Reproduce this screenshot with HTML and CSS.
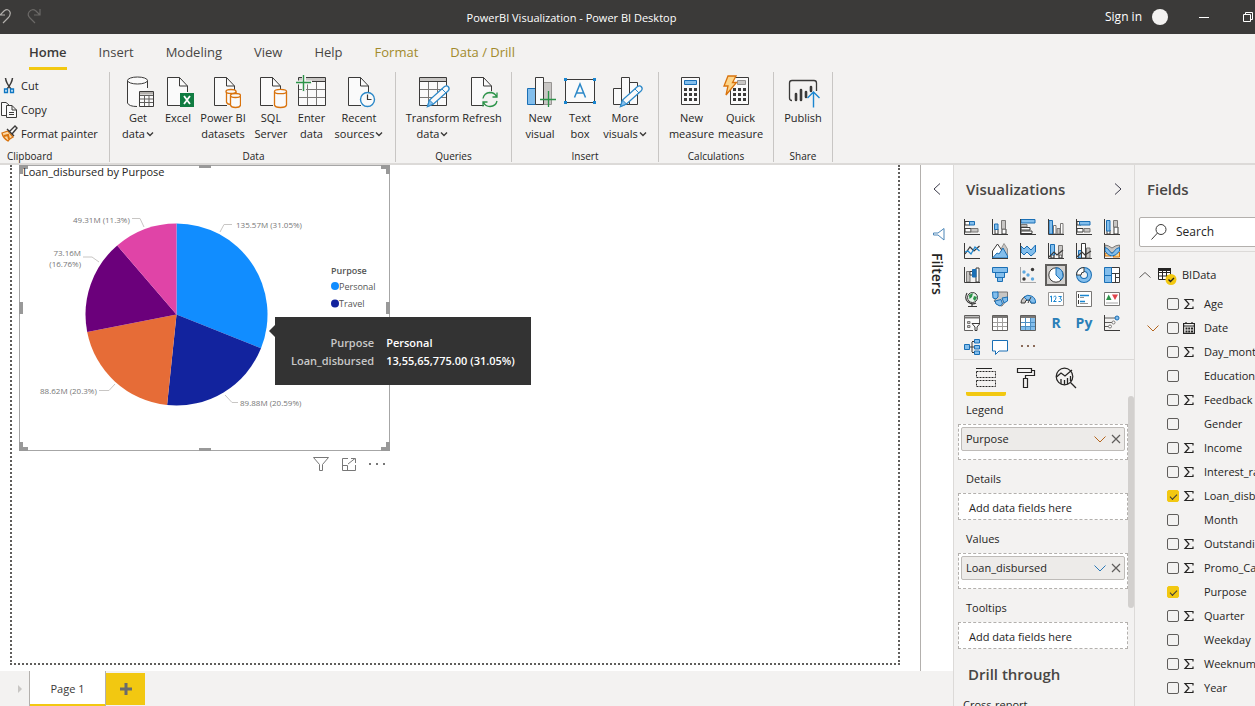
FILE: index.html
```html
<!DOCTYPE html>
<html lang="en">
<head>
<meta charset="utf-8">
<title>PowerBI Visualization - Power BI Desktop</title>
<link rel="stylesheet" href="styles.css">
</head>
<body>
<svg class="defs" aria-hidden="true">
  <symbol id="doc" viewBox="0 0 36 36"><path d="M7.500 3.500H19.500L28 12V31.500H7.500Z" fill="#fafafa"/><path d="M20 31.500H7.500V3.500H19.500L27.500 12V18M19.500 3.500V12H27.500" fill="none" stroke="#3b3a39"/></symbol>
  <symbol id="pencil" viewBox="0 0 36 36"><path d="M12.500 32.500L14.500 26L29.500 12.500Q32 11 33.500 13T33 17L18.500 30Z" fill="#fafafa" stroke="#2b88c8" stroke-width="1.300"/><path d="M12.500 32.500L14.500 26L18.500 30ZM27 15L31 19" fill="#83beec" stroke="#2b88c8"/></symbol>
  <symbol id="grid36" viewBox="0 0 36 36"><path d="M4.500 3.500H31.500V31.500H4.500Z" fill="#fafafa"/><path d="M4 4H32V7.500H4Z" fill="#c8c6c4"/><path d="M4 15.500H32M4 23.500H32M13.500 8V31M22.500 8V31" stroke="#797775"/><path d="M4.500 3.500H31.500V31.500H4.500ZM4 7.500H32" fill="none" stroke="#3b3a39"/></symbol>
  <symbol id="calc" viewBox="0 0 36 36"><path d="M7.500 3.500H25.500V30.500H7.500Z" fill="#fafafa" stroke="#3b3a39"/><path d="M10 14h3v3h-3zM15 14h3v3h-3zM20 14h3v3h-3zM10 19h3v3h-3zM15 19h3v3h-3zM20 19h3v3h-3zM10 24h3v3h-3zM15 24h3v3h-3zM20 24h3v3h-3z" fill="#3b3a39"/></symbol>
  <symbol id="sigma" viewBox="0 0 12 12"><path d="M10 3.500V1.500H2L6 6L2 10.500H10V8.500" fill="none" stroke="#252423" stroke-width="1.200"/></symbol>
  <symbol id="caret" viewBox="0 0 8 8"><path d="M1 2.500L4 5.500L7 2.500" fill="none" stroke="#3b3a39" stroke-width="1.400"/></symbol>
  <symbol id="down" viewBox="0 0 14 14"><path d="M1.500 4.500L7 10L12.500 4.500" fill="none" stroke="currentColor"/></symbol>
  <symbol id="close" viewBox="0 0 14 14"><path d="M3 3L11 11M11 3L3 11" stroke="#605e5c" stroke-width="1.200"/></symbol>
</svg>

<header class="titlebar">
  <div class="quick">
    <button aria-label="Undo"><svg width="12" height="18" viewBox="0 0 12 18"><path d="M0 7L4 3Q8 0 10 4Q11 7 8 10L3 15M0 7H5" fill="none" stroke="#b3b0ad" stroke-width="1.200"/></svg></button>
    <button aria-label="Redo"><svg width="16" height="18" viewBox="0 0 16 18"><path d="M14 7L10 3Q6 0 3 4Q1 7 4 10L9 15M14 1V7H8" fill="none" stroke="#6b6967" stroke-width="1.200"/></svg></button>
  </div>
  <h1 class="app-title">PowerBI Visualization - Power BI Desktop</h1>
  <div class="window-tools">
    <button class="signin">Sign in<span class="avatar"></span></button>
    <button aria-label="Minimize"><svg width="12" height="12" viewBox="0 0 12 12"><path d="M1 6.500H11" stroke="#fff"/></svg></button>
    <button aria-label="Restore"><svg width="12" height="12" viewBox="0 0 12 12"><path d="M1.500 3.500H8.500V10.500H1.500ZM3.500 3V1.500H10.500V8.500H9" fill="none" stroke="#fff"/></svg></button>
  </div>
</header>

<nav class="tabs">
  <button class="tab active">Home</button><button class="tab">Insert</button><button class="tab">Modeling</button><button class="tab">View</button><button class="tab">Help</button><button class="tab context">Format</button><button class="tab context">Data / Drill</button>
</nav>

<section class="ribbon">
  <div class="group clipboard">
    <div class="small-tools">
      <button><svg width="18" height="18" viewBox="0 0 18 18"><path d="M5.500 1Q6 6 11 12M12.500 1Q12 6 7 12" fill="none" stroke="#3b3a39" stroke-width="1.500"/><path d="M4.500 12h3v3.500h-3zM10.500 12h3v3.500h-3z" fill="#cfe6f8" stroke="#0f77c2" stroke-width="1.300"/></svg>Cut</button>
      <button><svg width="18" height="18" viewBox="0 0 18 18"><path d="M6 14.500H1.500V1.500H6L9 4" fill="#fafafa" stroke="#3b3a39"/><path d="M6.500 4.500H12L16.500 9V16.500H6.500ZM12 4.500V9H16.500M9 11.500H14M9 13.500H14" fill="#fafafa" stroke="#3b3a39"/></svg>Copy</button>
      <button><svg width="18" height="18" viewBox="0 0 18 18"><path d="M2 8L8 6L13 12Q9 14 8 16Q3 13 2 8Z" fill="#fbd7a4" stroke="#d9730d" stroke-width="1.300"/><path d="M4 11L8 10L9 14" fill="none" stroke="#d9730d" stroke-width="2"/><path d="M7 4L14 11M9 7L15 1L17 3L12 9" fill="#fafafa" stroke="#3b3a39" stroke-width="1.400"/></svg>Format painter</button>
    </div>
    <div class="group-name">Clipboard</div>
  </div>
  <div class="group data">
    <div class="tools">
      <button class="w40"><svg class="big" viewBox="0 0 36 36"><path d="M7.500 6.500V30Q9 33 18 33L19 18L27.500 16V6.500" fill="#fafafa"/><path d="M27.500 14V6.500M7.500 6.500V29Q9 32.500 17 32.500" fill="none" stroke="#3b3a39"/><ellipse cx="17.500" cy="6.500" rx="10" ry="3.500" fill="#fafafa" stroke="#3b3a39"/><path d="M19.500 17.500H33.500V32.500H19.500Z" fill="#fafafa" stroke="#3b3a39"/><path d="M20 18h13v2.500H20z" fill="#b3b0ad"/><path d="M20 21.500H33M20 25H33M20 28.500H33M24.500 21V32M29 21V32" stroke="#605e5c"/></svg>Get<br>data<svg class="caret"><use href="#caret"/></svg></button>
      <button class="w40"><svg class="big" viewBox="0 0 36 36"><use href="#doc"/><path d="M20 19H34V33H20Z" fill="#107c41"/><path d="M24 22L30 30M30 22L24 30" stroke="#fff" stroke-width="1.800"/></svg>Excel</button>
      <button class="w50"><svg class="big" viewBox="0 0 36 36"><g transform="translate(2)"><use href="#doc" width="36" height="36"/></g><g fill="#fafafa" stroke="#d9730d" stroke-width="1.300"><path d="M21.500 17.500V28Q22 30.500 26 30.500H31V17.500"/><ellipse cx="26" cy="17.500" rx="5" ry="2"/><path d="M25.500 21.500V31Q26 33.500 30.500 33.500T35.500 31V21.500"/><ellipse cx="30.500" cy="21.500" rx="5" ry="2"/></g></svg>Power BI<br>datasets</button>
      <button class="w46"><svg class="big" viewBox="0 0 36 36"><use href="#doc"/><g fill="#fafafa" stroke="#d9730d" stroke-width="1.300"><path d="M21.500 17.500V31Q22 33.500 27.500 33.500T33.500 31V17.500"/><ellipse cx="27.500" cy="17.500" rx="6" ry="2.200"/></g></svg>SQL<br>Server</button>
      <button class="w36"><svg class="big" viewBox="0 0 36 36"><use href="#grid36"/><path d="M10 0V18M1 8.500H18" stroke="#f3f2f1" stroke-width="4"/><path d="M9.500 1V17M2 8.500H17" stroke="#2b9348" stroke-width="1.400"/></svg>Enter<br>data</button>
      <button class="w60"><svg class="big" viewBox="0 0 36 36"><use href="#doc"/><circle cx="26.500" cy="25.500" r="7" fill="#fafafa" stroke="#2b88c8" stroke-width="1.400"/><path d="M26.500 20.500V25.500H30.500" fill="none" stroke="#3b3a39" stroke-width="1.200"/></svg>Recent<br>sources<svg class="caret"><use href="#caret"/></svg></button>
    </div>
    <div class="group-name">Data</div>
  </div>
  <div class="group">
    <div class="tools">
      <button class="w56"><svg class="big" viewBox="0 0 36 36"><use href="#grid36"/><use href="#pencil"/></svg>Transform<br>data<svg class="caret"><use href="#caret"/></svg></button>
      <button class="w42"><svg class="big" viewBox="0 0 36 36"><use href="#doc"/><circle cx="26" cy="25.500" r="8.500" fill="#f3f2f1"/><path d="M19 24.500Q20 19 26 18.500Q30.500 18.500 32.500 22.500M33 18.500V23H28.500M33 27Q32 32 26 32.500Q21.500 32.500 19.500 28.500M19 32.500V28H23.500" fill="none" stroke="#2b9348" stroke-width="1.300"/></svg>Refresh</button>
    </div>
    <div class="group-name">Queries</div>
  </div>
  <div class="group">
    <div class="tools">
      <button class="w40"><svg class="big" viewBox="0 0 36 36"><path d="M5.500 14.500H13.500V30.500H5.500Z" fill="#83beec" stroke="#1a6fb5"/><path d="M21.500 8.500H29.500V30.500H21.500Z" fill="#c8c6c4" stroke="#979593"/><path d="M13.500 3.500H21.500V30.500H13.500Z" fill="#fafafa" stroke="#3b3a39"/><path d="M26.500 17V33M18 25.500H34" stroke="#2b9348" stroke-width="1.300"/></svg>New<br>visual</button>
      <button class="w40"><svg class="big" viewBox="0 0 36 36"><path d="M3.500 5.500H32.500V28.500H3.500Z" fill="#fafafa" stroke="#3b3a39"/><path d="M2 4h3v3H2zM31 4h3v3h-3zM2 27h3v3H2zM31 27h3v3h-3z" fill="#1a86d0"/><path d="M12.500 23.500L18 10L23.500 23.500M14.500 19H21.500" fill="none" stroke="#2b88c8" stroke-width="1.500"/></svg>Text<br>box</button>
      <button class="w50"><svg class="big" viewBox="0 0 36 36"><path d="M6.500 14.500H14.500V30.500H6.500ZM22.500 8.500H30.500V30.500H22.500ZM14.500 3.500H22.500V30.500H14.500Z" fill="#fafafa" stroke="#3b3a39"/><g transform="translate(1)"><use href="#pencil" width="36" height="36"/></g></svg>More<br>visuals<svg class="caret"><use href="#caret"/></svg></button>
    </div>
    <div class="group-name">Insert</div>
  </div>
  <div class="group">
    <div class="tools">
      <button class="w49"><svg class="big" viewBox="0 0 36 36"><use href="#calc"/><path d="M10.500 6.500H22.500V10.500H10.500Z" fill="#83beec" stroke="#1a6fb5"/></svg>New<br>measure</button>
      <button class="w49"><svg class="big" viewBox="0 0 36 36"><use href="#calc"/><path d="M14.500 6.500H22.500V10.500H14.500Z" fill="#c8c6c4" stroke="#979593"/><path d="M5 2H13L9.500 8.500H13.500L3 21L5 12H1Z" fill="#fcd58a" stroke="#d9730d" stroke-width="1.300"/></svg>Quick<br>measure</button>
    </div>
    <div class="group-name">Calculations</div>
  </div>
  <div class="group">
    <div class="tools">
      <button class="w42"><svg class="big" viewBox="0 0 36 36"><path d="M7 26.500Q4.500 26.500 4.500 24V9Q4.500 6.500 7 6.500H29Q31.500 6.500 31.500 9V17" fill="none" stroke="#3b3a39" stroke-width="1.300"/><path d="M11 26V20M16 26V16M21 23V18M26 17V13" stroke="#3b3a39" stroke-width="2.600" stroke-linecap="round"/><path d="M28.500 33.500V18M22.500 24L28.500 18L34.500 24" fill="none" stroke="#1a86d0" stroke-width="1.400"/></svg>Publish</button>
    </div>
    <div class="group-name">Share</div>
  </div>
</section>

<main class="work">
  <div class="left">
    <div class="upper">
      <div class="canvas">
        <div class="page"></div>
        <article class="visual">
          <svg class="pie" viewBox="0 0 371 286" role="img" aria-label="Loan_disbursed by Purpose">
            <g transform="translate(0 1)">
              <path d="M157.500 148.500V57.500A91 91 0 0 1 242 182.300Z" fill="#118dff"/>
              <path d="M157.500 148.500L242 182.300A91 91 0 0 1 148.100 239Z" fill="#12239e"/>
              <path d="M157.500 148.500L148.100 239A91 91 0 0 1 68.200 165.900Z" fill="#e66c37"/>
              <path d="M157.500 148.500L68.200 165.900A91 91 0 0 1 98.200 79.500Z" fill="#6b007b"/>
              <path d="M157.500 148.500L98.200 79.500A91 91 0 0 1 157.500 57.500Z" fill="#e044a7"/>
              <path d="M113 52.500H121L125 61M213 58.500H205L201 66M64 91L73 91L80 96M80 224.500H90L96 218M219 236.500H213L206 229" fill="none" stroke="#c8c6c4"/>
              <g class="callout">
                <text x="54" y="57">49.31M (11.3%)</text><text x="217" y="62">135.57M (31.05%)</text>
                <text x="62" y="90" text-anchor="end">73.16M</text><text x="62" y="101" text-anchor="end">(16.76%)</text>
                <text x="21" y="228">88.62M (20.3%)</text><text x="221" y="240">89.88M (20.59%)</text>
              </g>
              <g class="key"><text class="key-title" x="312" y="108">Purpose</text><circle cx="316" cy="120" r="4" fill="#118dff"/><text x="320" y="124">Personal</text><circle cx="316" cy="137.500" r="4" fill="#12239e"/><text x="320" y="141">Travel</text></g>
            </g>
            <path d="M.500 0V285.500H370.500V.500H0" fill="none" stroke="#a6a6a6"/>
            <path d="M0 0H9V4H4V9H0ZM371 0H362V4H367V9H371ZM0 286H9V282H4V277H0ZM371 286H362V282H367V277H371ZM180 0H192V3H180ZM180 283H192V286H180ZM0 137H4V149H0ZM367 137H371V149H367Z" fill="#999"/>
          </svg>
          <h2>Loan_disbursed by Purpose</h2>
        </article>
        <div class="visual-actions">
          <button aria-label="Filters"><svg width="18" height="18" viewBox="0 0 18 18"><path d="M1.500 2.500H16.500L10.500 9.500V15.500H7.500V9.500Z" fill="none" stroke="#777"/></svg></button>
          <button aria-label="Focus mode"><svg width="18" height="18" viewBox="0 0 18 18"><path d="M8 3.500H2.500V15.500H15.500V10M2.500 10.500H7.500V15M8 9L15 3.500M11 3.500H15.500V8" fill="none" stroke="#777"/></svg></button>
          <button aria-label="More options"><svg width="18" height="18" viewBox="0 0 18 18"><path d="M1 8h2v2H1zM8 8h2v2H8zM15 8h2v2h-2z" fill="#777"/></svg></button>
        </div>
        <dl class="tip"><dt>Purpose</dt><dd>Personal</dd><dt>Loan_disbursed</dt><dd>13,55,65,775.00 (31.05%)</dd></dl>
      </div>
      <aside class="filters">
        <button aria-label="Expand filters"><svg width="14" height="14" viewBox="0 0 14 14"><path d="M10 1.500L4 7L10 12.500" fill="none" stroke="#3b3a49"/></svg></button>
        <svg class="funnel" width="14" height="14" viewBox="0 0 14 14"><path d="M1.500 6V8H6L12 13V1.500L6 6Z" fill="none" stroke="#4c86b8"/></svg>
        <span>Filters</span>
      </aside>
    </div>
    <footer class="pages">
      <button class="nav" aria-label="Next page"><svg width="6" height="10" viewBox="0 0 6 10"><path d="M1 1L5 5L1 9Z" fill="#c8c6c4"/></svg></button>
      <button class="page-tab">Page 1</button>
      <button class="add" aria-label="New page"><svg width="12" height="12" viewBox="0 0 12 12"><path d="M6 0V12M0 6H12" stroke="#6b6b6b" stroke-width="3"/></svg></button>
    </footer>
  </div>

  <aside class="viz">
    <div class="pane-head"><h2>Visualizations</h2><button aria-label="Collapse"><svg width="14" height="14" viewBox="0 0 14 14"><path d="M4 1.500L10 7L4 12.500" fill="none" stroke="#3b3a49"/></svg></button></div>
    <div class="gallery">
      <button aria-label="Stacked bar"><svg viewBox="0 0 16 16"><path d="M1 2.500H6V6H1ZM1 9.500H7V13H1Z" fill="#fff" stroke="#3b3a39"/><path d="M5.500 2.500H10.500V6H5.500Z" fill="#83beec" stroke="#1a6fb5"/><path d="M7 9.500H14V13H7Z" fill="#c8c6c4" stroke="#797775"/><path d="M.500 0V15.500H16" fill="none" stroke="#3b3a39"/></svg></button>
      <button aria-label="Stacked column"><svg viewBox="0 0 16 16"><path d="M3 10H6V15H3ZM10 10H14V15H10Z" fill="#fff" stroke="#3b3a39"/><path d="M2.500 5H6V10.500H2.500Z" fill="#83beec" stroke="#1a6fb5"/><path d="M9.500 1.500H13.500V10H9.500Z" fill="#c8c6c4" stroke="#797775"/><path d="M.500 0V15.500H16" fill="none" stroke="#3b3a39"/></svg></button>
      <button aria-label="Clustered bar"><svg viewBox="0 0 16 16"><path d="M1 .500H15V4H1Z" fill="#83beec" stroke="#1a6fb5"/><path d="M1 5.500H7V8H1Z" fill="#c8c6c4" stroke="#797775"/><path d="M1 8.500H10V11H1ZM1 12H12V14.500H1Z" fill="#fff" stroke="#3b3a39"/><path d="M.500 0V15.500H16" fill="none" stroke="#3b3a39"/></svg></button>
      <button aria-label="Clustered column"><svg viewBox="0 0 16 16"><path d="M1 1.500H4.500V15H1Z" fill="#83beec" stroke="#1a6fb5"/><path d="M5.500 6.500H8V15H5.500ZM12.500 4.500H15V15H12.500Z" fill="#fff" stroke="#797775"/><path d="M9 9.500H12V15H9Z" fill="#c8c6c4" stroke="#797775"/><path d="M.500 0V15.500H16" fill="none" stroke="#3b3a39"/></svg></button>
      <button aria-label="100% stacked bar"><svg viewBox="0 0 16 16"><path d="M1 2.500H5V6H1ZM1 9.500H7V13H1Z" fill="#fff" stroke="#3b3a39"/><path d="M3.500 2.500H14V6H3.500Z" fill="#83beec" stroke="#1a6fb5"/><path d="M8 9.500H14V13H8Z" fill="#c8c6c4" stroke="#797775"/><path d="M.500 0V15.500H16" fill="none" stroke="#3b3a39"/></svg></button>
      <button aria-label="100% stacked column"><svg viewBox="0 0 16 16"><path d="M3 11H6V15H3ZM10 8H14V15H10Z" fill="#fff" stroke="#3b3a39"/><path d="M2.500 1.500H6V12H2.500Z" fill="#83beec" stroke="#1a6fb5"/><path d="M9.500 1.500H13.500V8H9.500Z" fill="#c8c6c4" stroke="#797775"/><path d="M.500 0V15.500H16" fill="none" stroke="#3b3a39"/></svg></button>

      <button aria-label="Line"><svg viewBox="0 0 16 16"><path d="M1 11L6 4L10 8L15.500 3" fill="none" stroke="#3b3a39" stroke-width="1.200"/><path d="M1 9L4 8L7 11L11 4L15.500 8" fill="none" stroke="#1a86d0" stroke-width="1.200"/><path d="M.500 0V15.500H16" fill="none" stroke="#3b3a39"/></svg></button>
      <button aria-label="Area"><svg viewBox="0 0 16 16"><path d="M9 6L12 .500L15.500 6V15H9Z" fill="#c8c6c4" stroke="#979593"/><path d="M.500 8L5.500 1L11 9V15H.500Z" fill="#fff" stroke="#3b3a39"/><path d="M.500 15L5 10L7 11L11 5L15.500 13V15Z" fill="#83beec" stroke="#1a6fb5"/><path d="M0 15.500H16" stroke="#3b3a39"/></svg></button>
      <button aria-label="Stacked area"><svg viewBox="0 0 16 16"><path d="M1 3L4 6L7 3L11 7L15.500 2V9L11 13L7 9L4 12L1 9Z" fill="#83beec" stroke="#1a6fb5"/><path d="M.500 0V15.500H16" fill="none" stroke="#3b3a39"/></svg></button>
      <button aria-label="Line and stacked column"><svg viewBox="0 0 16 16"><path d="M2.500 1.500H6.500V12H2.500Z" fill="#83beec" stroke="#1a6fb5"/><path d="M10.500 2.500H14.500V12H10.500Z" fill="#c8c6c4" stroke="#797775"/><path d="M3 12V15H6V12M11 12V15H14V12M1 14L6 9L9 12L15 7" fill="none" stroke="#3b3a39" stroke-width="1.200"/><path d="M.500 0V15.500H16" fill="none" stroke="#3b3a39"/></svg></button>
      <button aria-label="Line and clustered column"><svg viewBox="0 0 16 16"><path d="M2.500 7.500H5.500V15H2.500Z" fill="#83beec" stroke="#1a6fb5"/><path d="M5.500 .500H9.500V15H5.500Z" fill="#fff" stroke="#3b3a39"/><path d="M10.500 5H14V15H10.500Z" fill="#c8c6c4" stroke="#797775"/><path d="M1 14L6 9L9 12L15 8" fill="none" stroke="#3b3a39" stroke-width="1.200"/><path d="M.500 0V15.500H16" fill="none" stroke="#3b3a39"/></svg></button>
      <button aria-label="Ribbon"><svg viewBox="0 0 16 16"><path d="M1 10Q4 10 7 13H1ZM15.500 9Q11 10 9 14H15.500Z" fill="#fcd58a" stroke="#d9730d"/><path d="M1 2Q4 2 8 5Q12 2 15.500 2V6Q12 7 8 10Q4 7 1 6Z" fill="#c8c6c4" stroke="#797775"/><path d="M1 4.500Q4 5 6 8.500T10 8.500T15.500 4.500V8Q12 13 8 13T1 8Z" fill="#83beec" stroke="#1a6fb5"/><path d="M.500 0V15.500H16" fill="none" stroke="#3b3a39"/></svg></button>

      <button aria-label="Waterfall"><svg viewBox="0 0 16 16"><path d="M2.500 4.500H6V15H2.500Z" fill="#c8c6c4" stroke="#797775"/><path d="M6 4.500H9V8H6ZM12 1H15V15H12Z" fill="#fff" stroke="#3b3a39"/><path d="M8.500 2.500H12V10H8.500Z" fill="#1a6fb5" stroke="#1a6fb5"/><path d="M.500 0V15.500H16" fill="none" stroke="#3b3a39"/></svg></button>
      <button aria-label="Funnel"><svg viewBox="0 0 16 16"><path d="M.500 .500H15.500V5.500H.500ZM3.500 5.500H12.500V10.500H3.500ZM5.500 10.500H10.500V14.500H5.500Z" fill="#83beec" stroke="#1a6fb5"/></svg></button>
      <button aria-label="Scatter"><svg viewBox="0 0 16 16"><g fill="#3b3a39"><circle cx="12.500" cy="2.500" r="1.700"/><circle cx="4" cy="12" r="1.700"/></g><g fill="#5ea9e0"><circle cx="4" cy="5" r="1.700"/><circle cx="8" cy="8" r="1.700"/><circle cx="12.500" cy="12" r="1.700"/></g><path d="M.500 0V15.500H16" fill="none" stroke="#a6a6a6"/></svg></button>
      <button class="selected" aria-label="Pie"><svg viewBox="0 0 16 16"><circle cx="8" cy="8" r="7.200" fill="#fff" stroke="#3b3a39"/><path d="M8 8V.800A7.200 7.200 0 0 1 13 13Z" fill="#83beec" stroke="#1a6fb5"/></svg></button>
      <button aria-label="Donut"><svg viewBox="0 0 16 16"><circle cx="8" cy="8" r="5.500" fill="none" stroke="#1a6fb5" stroke-width="5"/><circle cx="8" cy="8" r="5.500" fill="none" stroke="#83beec" stroke-width="3"/><path d="M8 .500A7.500 7.500 0 0 0 .500 8H5A3 3 0 0 1 8 5Z" fill="#fff" stroke="#3b3a39"/></svg></button>
      <button aria-label="Treemap"><svg viewBox="0 0 16 16"><path d="M7 .500H15.500V15.500H7Z" fill="#fff" stroke="#3b3a39"/><path d="M7 6.500H15.500M11.500 6.500V15M11 10.500H15" fill="none" stroke="#3b3a39"/><path d="M.500 .500H7.500V15.500H.500ZM.500 8.500H7" fill="#83beec" stroke="#1a6fb5"/></svg></button>

      <button aria-label="Map"><svg viewBox="0 0 16 16"><circle cx="8.500" cy="6.500" r="5" fill="#e8f3ea" stroke="#3b3a39"/><path d="M5 4L9 2L8 6L5.500 8ZM10 5L13 6L11 10L9 8Z" fill="#2b9348"/><path d="M3 2Q0 8 4 11T12 12M8 13V15M4 15.500H13" fill="none" stroke="#3b3a39" stroke-width="1.200"/></svg></button>
      <button aria-label="Filled map"><svg viewBox="0 0 16 16"><path d="M5 1L15.500 1V8L10 15L6 14L2 10L5 6Z" fill="#c8c6c4" stroke="#797775"/><path d="M.500 1H6V6L4 8L1 7ZM3 10L9 8.500L10.500 13L8 15L4 13ZM10 7L15.500 6V10L12 12Z" fill="#83beec" stroke="#1a6fb5"/></svg></button>
      <button aria-label="Gauge"><svg viewBox="0 0 16 16"><path d="M1 12A7 7 0 0 1 15 12H11A3 3 0 0 0 5 12Z" fill="#c8c6c4" stroke="#3b3a39"/><path d="M4 6A7 7 0 0 1 15.500 12H11A3 3 0 0 0 7 9Z" fill="#83beec" stroke="#1a6fb5"/><path d="M8 12L11 6" stroke="#3b3a39"/></svg></button>
      <button aria-label="Card"><svg viewBox="0 0 16 16"><path d="M.500 1.500H15.500V14.500H.500Z" fill="#fff" stroke="#979593"/><path d="M2 6L3.500 5V11M5.500 6Q8 4 8 6.500T5.500 10.500H8.500M10.500 5.500H13.500L12 7.500Q14 8 13.500 9.500T10.500 10.500" fill="none" stroke="#1a86d0"/></svg></button>
      <button aria-label="Multi-row card"><svg viewBox="0 0 16 16"><path d="M.500 .500H15.500V15.500H.500Z" fill="#fff" stroke="#797775"/><path d="M2.500 3V7M2.500 9V13" stroke="#3b3a39"/><path d="M4 4.500H13M4 10.500H9" stroke="#1a86d0" stroke-width="1.500"/><path d="M4 6.500H8M4 12.500H12" stroke="#979593"/></svg></button>
      <button aria-label="KPI"><svg viewBox="0 0 16 16"><path d="M.500 1.500H15.500V14.500H.500Z" fill="#fff" stroke="#797775"/><path d="M2 9H7.500L4.700 3.500Z" fill="#2b9348"/><path d="M8 3.500H14L11 9Z" fill="#e0434a"/><path d="M2 12H14" stroke="#a6a6a6"/></svg></button>

      <button aria-label="Slicer"><svg viewBox="0 0 16 16"><path d="M9 15.500H.500V.500H15.500V8" fill="#fafafa" stroke="#605e5c"/><path d="M.500 2.500H15.500" stroke="#797775" stroke-width="2"/><path d="M3.500 6.500H6V8.500H3.500ZM3.500 10.500H6V12.500H3.500Z" fill="#c8c6c4" stroke="#797775"/><path d="M8 8.500H16L13 12V15.500H11V12Z" fill="#fff" stroke="#3b3a39"/></svg></button>
      <button aria-label="Table"><svg viewBox="0 0 16 16"><path d="M.500 .500H15.500V15.500H.500Z" fill="#fff" stroke="#605e5c"/><path d="M1 2H15" stroke="#797775" stroke-width="2"/><path d="M1 7.500H15M1 11.500H15M5.500 3V15M10.500 3V15" stroke="#a19f9d"/></svg></button>
      <button aria-label="Matrix"><svg viewBox="0 0 16 16"><path d="M.500 .500H15.500V15.500H.500Z" fill="#83beec" stroke="#605e5c"/><path d="M1 3H10V11H1Z" fill="#fff"/><path d="M1 2H15" stroke="#797775" stroke-width="2"/><path d="M1 7.500H15M1 11.500H15M5.500 3V15M10.500 3V15" stroke="#4c8fc4"/></svg></button>
      <button class="script-name">R</button>
      <button class="script-name">Py</button>
      <button aria-label="Key influencers"><svg viewBox="0 0 16 16"><path d="M1 3H12M1 7.500H8M1 11.500H5" stroke="#605e5c"/><circle cx="13" cy="3" r="2" fill="#83beec" stroke="#1a6fb5"/><circle cx="9.500" cy="7.500" r="1.500" fill="#fff" stroke="#797775"/><circle cx="6" cy="11.500" r="1.500" fill="#fff" stroke="#797775"/><path d="M.500 0V15.500H16" fill="none" stroke="#3b3a39"/></svg></button>

      <button aria-label="Decomposition tree"><svg viewBox="0 0 16 16"><path d="M5 8H11M8 3V13M8 2.500H11M8 13.500H11" fill="none" stroke="#3b3a39"/><path d="M.500 5.500H5.500V10.500H.500ZM10.500 .500H15.500V4H10.500ZM10.500 6.500H15.500V10H10.500ZM10.500 12H15.500V15.500H10.500Z" fill="#83beec" stroke="#1a6fb5"/></svg></button>
      <button aria-label="Q&amp;A"><svg viewBox="0 0 16 16"><path d="M.500 1.500H15.500V12H7L3.500 15.500V12H.500Z" fill="#fff" stroke="#1a6fb5"/></svg></button>
      <button aria-label="More visuals"><svg viewBox="0 0 16 16"><path d="M1 6h2v2H1zM7 6h2v2H7zM13 6h2v2h-2z" fill="#8a6a58"/></svg></button>
    </div>
    <div class="modes">
      <button class="on" aria-label="Fields"><svg width="24" height="24" viewBox="0 0 24 24"><path d="M2 2.500H18" stroke="#252423"/><path d="M2.500 5.500H21.500V11.500H2.500ZM2.500 14.500H21.500V20.500H2.500Z" fill="none" stroke="#252423" stroke-dasharray="2 1"/></svg></button>
      <button aria-label="Format"><svg width="24" height="24" viewBox="0 0 24 24"><path d="M3.500 2.500H17.500V6.500H3.500ZM17.500 4.500H20.500V9.500H11.500V12.500M9.500 12.500H13.500V21.500H9.500Z" fill="none" stroke="#252423" stroke-width="1.200"/></svg></button>
      <button aria-label="Analytics"><svg width="24" height="24" viewBox="0 0 24 24"><circle cx="10.500" cy="10.500" r="8.300" fill="none" stroke="#252423" stroke-width="1.200"/><path d="M2.500 11L7 7L11 10L18 4M16.500 16.500L22 22M7 18V13M10.500 18.500V14M13.500 18V12M16.500 15V10" fill="none" stroke="#252423" stroke-width="1.300"/></svg></button>
    </div>
    <div class="wells">
      <section><h3>Legend</h3><div class="well"><div class="pill"><span>Purpose</span><button class="warm" aria-label="Purpose options"><svg class="i14"><use href="#down"/></svg></button><button aria-label="Remove Purpose"><svg class="i14"><use href="#close"/></svg></button></div></div></section>
      <section><h3>Details</h3><div class="well empty">Add data fields here</div></section>
      <section><h3>Values</h3><div class="well"><div class="pill"><span>Loan_disbursed</span><button class="cool" aria-label="Loan_disbursed options"><svg class="i14"><use href="#down"/></svg></button><button aria-label="Remove Loan_disbursed"><svg class="i14"><use href="#close"/></svg></button></div></div></section>
      <section><h3>Tooltips</h3><div class="well empty">Add data fields here</div></section>
      <h2>Drill through</h2>
      <p>Cross-report</p>
      <div class="thumb"></div>
    </div>
  </aside>

  <aside class="fields">
    <div class="pane-head"><h2>Fields</h2></div>
    <label class="search"><svg width="18" height="18" viewBox="0 0 18 18"><circle cx="11" cy="6.500" r="5" fill="none" stroke="#3b3a39"/><path d="M7.500 10L1.500 16.500" stroke="#3b3a39"/></svg><input type="text" placeholder="Search" aria-label="Search"></label>
    <div class="list">
      <button class="table-row"><svg width="14" height="14" viewBox="0 0 14 14"><path d="M1.500 9.500L7 4.500L12.500 9.500" fill="none" stroke="#605e5c"/></svg><svg width="20" height="20" viewBox="0 0 20 20"><path d="M1.500 3.500H13.500V14.500H1.500ZM1.500 7.500H13.500M1.500 11H13.500M5.500 6V14M9.500 6V14" fill="#fff" stroke="#252423"/><path d="M1 3H14V6H1Z" fill="#252423"/><circle cx="14" cy="14.500" r="5.500" fill="#f2c811"/><path d="M11.500 14.500L13.500 16.500L17 13" fill="none" stroke="#252423" stroke-width="1.400"/></svg><b>BIData</b></button>
      <label class="field"><i></i><input type="checkbox"><svg class="i12"><use href="#sigma"/></svg><span>Age</span></label>
      <label class="field"><i class="warm"><svg class="i14"><use href="#down"/></svg></i><input type="checkbox"><svg class="i12" viewBox="0 0 12 12"><path d="M.600 1.500H11.400V11.400H.600ZM.600 4H11.400M3 0V2M9 0V2" fill="none" stroke="#252423" stroke-width="1.200"/><path d="M2.500 5.500h2v2h-2zM5.200 5.500h2v2h-2zM8 5.500h2v2H8zM2.500 8.500h2v2h-2zM5.200 8.500h2v2h-2zM8 8.500h2v2H8z" fill="#252423"/></svg><span>Date</span></label>
      <label class="field"><i></i><input type="checkbox"><svg class="i12"><use href="#sigma"/></svg><span>Day_month</span></label>
      <label class="field"><i></i><input type="checkbox"><svg class="i12"></svg><span>Education</span></label>
      <label class="field"><i></i><input type="checkbox"><svg class="i12"><use href="#sigma"/></svg><span>Feedback</span></label>
      <label class="field"><i></i><input type="checkbox"><svg class="i12"></svg><span>Gender</span></label>
      <label class="field"><i></i><input type="checkbox"><svg class="i12"><use href="#sigma"/></svg><span>Income</span></label>
      <label class="field"><i></i><input type="checkbox"><svg class="i12"><use href="#sigma"/></svg><span>Interest_rate</span></label>
      <label class="field"><i></i><input type="checkbox" checked><svg class="i12"><use href="#sigma"/></svg><span>Loan_disbursed</span></label>
      <label class="field"><i></i><input type="checkbox"><svg class="i12"></svg><span>Month</span></label>
      <label class="field"><i></i><input type="checkbox"><svg class="i12"><use href="#sigma"/></svg><span>Outstanding</span></label>
      <label class="field"><i></i><input type="checkbox"><svg class="i12"><use href="#sigma"/></svg><span>Promo_Calls</span></label>
      <label class="field"><i></i><input type="checkbox" checked><svg class="i12"></svg><span>Purpose</span></label>
      <label class="field"><i></i><input type="checkbox"><svg class="i12"><use href="#sigma"/></svg><span>Quarter</span></label>
      <label class="field"><i></i><input type="checkbox"><svg class="i12"></svg><span>Weekday</span></label>
      <label class="field"><i></i><input type="checkbox"><svg class="i12"><use href="#sigma"/></svg><span>Weeknum</span></label>
      <label class="field"><i></i><input type="checkbox"><svg class="i12"><use href="#sigma"/></svg><span>Year</span></label>
    </div>
  </aside>
</main>
</body>
</html>
```

FILE: styles.css
```css
* { box-sizing: border-box; }
body { margin: 0; height: 100vh; overflow: hidden; display: flex; flex-direction: column; background: #f3f2f1; color: #252423; font: 11px/16px "Open Sans", "Noto Sans", sans-serif; }
button { padding: 0; border: 0; background: none; font: inherit; color: inherit; }
h1, h2, h3, p, dl, dt, dd { margin: 0; font-weight: 400; }
svg { display: block; flex: none; }
.defs { position: absolute; width: 0; height: 0; }

.titlebar { flex: none; height: 34px; display: flex; align-items: center; background: #3b3a39; color: #fff; overflow: hidden; }
.quick { display: flex; width: 38px; gap: 14px; }
.app-title { margin: 0 auto; padding-top: 2px; font-size: 11px; white-space: nowrap; }
.window-tools { width: 150px; display: flex; align-items: center; flex: none; }
.window-tools button { flex: none; }
.window-tools .signin { display: flex; align-items: center; gap: 10px; margin-right: 30px; font-size: 12px; }
.window-tools button:last-child { margin-left: 32px; }
.avatar { width: 16px; height: 16px; border-radius: 50%; background: #f3f2f1; }

.tabs { flex: none; height: 36px; padding-left: 29px; display: flex; gap: 32px; font-size: 13px; }
.tab { height: 36px; padding-top: 2px; border-bottom: 3px solid transparent; color: #484644; white-space: nowrap; }
.tab.active { font-weight: 600; color: #3b3a39; border-color: #f2c811; }
.tab.context { color: #a28a2c; }

.ribbon { flex: none; height: 95px; display: flex; padding-top: 2px; border-bottom: 2px solid #dcdad8; }
.group { display: flex; flex-direction: column; justify-content: space-between; height: 90px; padding: 2px 8px 0; border-right: 1px solid #c8c6c4; }
.group.data { padding: 2px 6px 0 8px; }
.tools { display: flex; justify-content: center; white-space: nowrap; }
.tools button { display: block; align-self: flex-start; text-align: center; }
.big { width: 36px; height: 36px; margin: 0 auto; }
.caret { display: inline-block; width: 8px; height: 8px; margin-left: 1px; }
.group-name { font-size: 10px; line-height: 12px; text-align: center; }
.w36 { width: 35px; } .w40 { width: 40px; } .w42 { width: 42px; } .w46 { width: 46px; }
.w49 { width: 49px; } .w50 { width: 50px; } .w56 { width: 57px; } .w60 { width: 60px; }
.group.clipboard { width: 110px; padding: 2px 0 0; }
.clipboard .group-name { text-align: left; padding-left: 7px; }
.small-tools { display: grid; grid-auto-rows: 24px; }
.small-tools button { display: flex; align-items: center; gap: 3px; white-space: nowrap; }

.work { flex: 1; min-height: 0; display: flex; }
.left { flex: 1; min-width: 0; display: flex; flex-direction: column; }
.upper { flex: 1; min-height: 0; display: flex; background: #fff; }
.canvas { position: relative; flex: 1; overflow: hidden; padding: 0 20px 6px 10px; }
.page { height: 100%; border: 2px dotted #605e5c; border-top: 0; }
.visual { position: absolute; left: 19px; top: 0; }
.visual h2 { position: absolute; left: 4px; top: 0; font-size: 11px; line-height: 14px; white-space: nowrap; }
.pie { width: 371px; height: 286px; }
.callout { font-size: 8px; fill: #777; }
.key { font-size: 9px; fill: #555; }
.key-title { font-weight: 600; }
.visual-actions { position: absolute; left: 312px; top: 290px; display: flex; gap: 10px; }
.tip { position: absolute; left: 275px; top: 152px; padding: 17px 16px 15px; display: grid; grid-template-columns: auto auto; column-gap: 12px; line-height: 18px; background: #333; color: #fff; white-space: nowrap; font-size: 11px; }
.tip dt, .tip dd { font-weight: 600; }
.tip dt { text-align: right; color: #c8c8c8; }
.tip::before { content: ""; position: absolute; left: -6px; top: 8px; border: 6px solid transparent; border-right-color: #333; border-left: 0; }
.filters { width: 33px; flex: none; border-left: 1px solid #b3b0ad; display: flex; flex-direction: column; align-items: center; padding-top: 17px; }
.funnel { margin: 31px 0 12px 4px; }
.filters span { writing-mode: vertical-rl; font-size: 14px; font-weight: 600; }

.pages { height: 35px; flex: none; display: flex; }
.pages .nav { width: 29px; display: flex; align-items: center; justify-content: flex-end; padding-right: 6px; }
.page-tab { width: 77px; background: #fff; border: 1px solid #b3b0ad; border-width: 0 1px; box-shadow: inset 0 -2px #f2c811; color: #3b3a39; font-weight: 500; }
.add { width: 39px; height: 32px; margin-top: 2px; background: #f2c811; display: grid; place-items: center; }

.viz { flex: none; width: 182px; border: 1px solid #dcdad8; border-width: 0 1px; display: flex; flex-direction: column; overflow: hidden; }
.pane-head { flex: none; height: 48px; padding: 0 9px 0 12px; display: flex; align-items: center; justify-content: space-between; }
.pane-head h2, .wells h2 { font-size: 15px; line-height: 20px; font-weight: 600; color: #484644; }
.gallery { flex: none; display: grid; grid-template-columns: repeat(6, 28px); grid-auto-rows: 24px; padding: 2px 0 0 4px; height: 147px; border-bottom: 1px solid #dcdad8; }
.gallery button { display: grid; place-items: center; width: 22px; height: 22px; margin: 1px 3px; }
.gallery svg { width: 16px; height: 16px; }
.gallery .selected { background: #d2d0ce; border: 2px solid #605e5c; }
.gallery .script-name { color: #2b7fb8; font-size: 14px; font-weight: 700; }
.modes { flex: none; display: flex; padding-left: 12px; height: 36px; }
.modes button { width: 40px; height: 36px; padding-top: 6px; display: flex; justify-content: center; border-bottom: 4px solid transparent; }
.modes .on { border-radius: 2px; border-color: #f2c811; }
.wells { position: relative; flex: 1; min-height: 0; padding: 0 6px 0 4px; display: flex; flex-direction: column; gap: 5px; }
.wells h3 { padding-left: 8px; font-size: 11px; line-height: 28px; }
.well { height: 36px; padding: 2px; border: 1px dashed #b3b0ad; background: #fff; }
.well.empty { height: 27px; padding: 0 10px; line-height: 27px; }
.pill { display: flex; align-items: center; gap: 2px; height: 24px; padding: 0 1px 0 4px; background: #edebe9; border: 1px solid #bebbb8; border-radius: 2px; }
.pill span { flex: 1; }
.i14 { width: 14px; height: 14px; }
.i12 { width: 12px; height: 12px; }
.warm { color: #b5651d; }
.cool { color: #2b79b8; }
.wells h2 { padding: 10px 10px 0; }
.wells p { padding: 8px 5px 0; white-space: nowrap; }
.thumb { position: absolute; right: 0; top: 0; width: 6px; height: 212px; border-radius: 3px; background: #d2d0ce; }

.fields { flex: none; width: 120px; overflow: hidden; }
.search { display: flex; align-items: center; gap: 8px; height: 30px; width: 200px; margin: 4px 0 4px 4px; padding-left: 10px; background: #fff; border: 1px solid #b3b0ad; border-radius: 2px; font-size: 12px; }
.search input { border: 0; outline: 0; padding: 0; font: inherit; width: 140px; color: #252423; }
.search input::placeholder { color: #252423; opacity: 1; }
.list { border-top: 1px solid #dcdad8; padding-top: 8px; }
.table-row { display: flex; align-items: center; height: 30px; margin-bottom: 2px; padding-left: 3px; gap: 5px; }
.table-row b { font-weight: 400; }
.field { display: flex; align-items: center; height: 24px; padding-left: 11px; white-space: nowrap; }
.field i { width: 14px; flex: none; margin-right: 7px; }
.field input { appearance: none; flex: none; width: 12px; height: 12px; margin: 0 4px 0 0; border: 1px solid #605e5c; border-radius: 2px; }
.field input:checked { border-color: #f2c811; background: #f2c811; display: grid; place-items: center; }
.field input:checked::after { content: ""; width: 6px; height: 3px; border: solid #3b3a39; border-width: 0 0 1px 1px; transform: rotate(-45deg); }
.field span { margin-left: 9px; }
```
